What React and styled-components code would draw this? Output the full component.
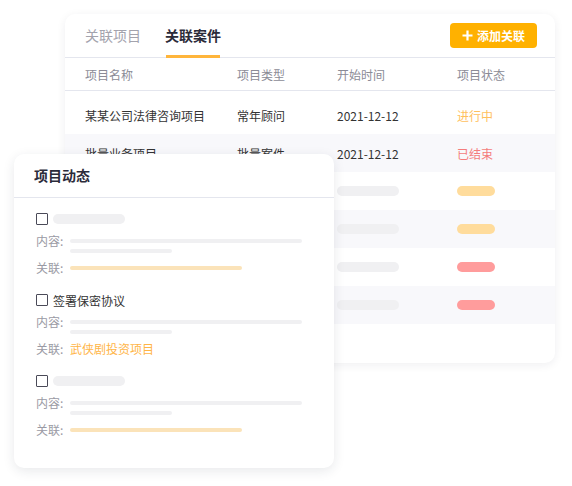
// Libraries
import React from 'react';

// Styles
import styled, { createGlobalStyle } from 'styled-components';

const GlobalStyle = createGlobalStyle`
  html, body {
    margin: 0;
    padding: 0;
    background: #fff;
  }
  body {
    font-family: "Noto Sans CJK SC", "Noto Sans", sans-serif;
    color: #333;
  }
  * {
    box-sizing: border-box;
  }
`;

const CanvasStyle = styled.div`
  position: relative;
  width: 572px;
  height: 486px;
  overflow: hidden;
  background: #fff;
`;

const CardStyle = styled.div`
  position: absolute;
  left: ${(props) => props.x}px;
  top: ${(props) => props.y}px;
  width: ${(props) => props.w}px;
  height: ${(props) => props.h}px;
  background: #fff;
  border-radius: 10px;
  overflow: hidden;
  box-shadow: ${(props) =>
    props.front
      ? '0 3px 12px rgba(30, 35, 60, 0.1)'
      : '0 2px 10px rgba(30, 35, 60, 0.07)'};
`;

// Case table card
const TabBarStyle = styled.div`
  display: flex;
  align-items: center;
  height: 44px;
  padding: 0 18px 0 20px;
  border-bottom: 1px solid #e4e6ee;
`;

const TabStyle = styled.div`
  position: relative;
  display: flex;
  align-items: center;
  height: 100%;
  padding-bottom: 1px;
  margin-right: 24px;
  font-size: 14px;
  font-weight: ${(props) => (props.active ? 700 : 400)};
  color: ${(props) => (props.active ? '#2b2b3a' : '#a3a3ad')};
  ${(props) =>
    props.active &&
    `
    &:after {
      content: '';
      position: absolute;
      left: 1px;
      right: 1px;
      bottom: -1px;
      height: 3px;
      background: #ffb53b;
    }
  `};
`;

const AddButtonStyle = styled.button`
  margin-left: auto;
  display: flex;
  align-items: center;
  justify-content: center;
  gap: 4px;
  width: 87px;
  height: 25px;
  padding: 0;
  border: none;
  border-radius: 4px;
  background: #ffb100;
  color: #fff;
  font-family: inherit;
  font-size: 12px;
  font-weight: 700;
  svg {
    display: block;
  }
`;

const TableRowStyle = styled.div`
  display: grid;
  grid-template-columns: 152px 100px 120px 1fr;
  align-items: center;
  height: ${(props) => props.h || 38}px;
  padding-left: 20px;
  background: ${(props) => (props.striped ? '#f8f8fb' : '#fff')};
  font-size: 12px;
  color: ${(props) => (props.head ? '#8b8b96' : '#333')};
  ${(props) => props.head && 'border-bottom: 1px solid #e4e6ee;'}
`;

const TableBodyStyle = styled.div`
  padding-top: 5px;
`;

const StatusStyle = styled.span`
  color: ${(props) => (props.done ? '#f47c7c' : '#ffbf5e')};
`;

const PillStyle = styled.div`
  width: ${(props) => props.w}px;
  height: 10px;
  border-radius: 5px;
  background: ${(props) => props.color || '#f0f0f2'};
`;

// Activity card
const PanelHeaderStyle = styled.div`
  display: flex;
  align-items: center;
  height: 44px;
  padding: 0 20px 1px;
  border-bottom: 1px solid #e4e6ee;
  font-size: 14px;
  font-weight: 700;
  color: #2b2b3a;
`;

const PanelBodyStyle = styled.div`
  display: flex;
  flex-direction: column;
  gap: 14px;
  padding: 11px 22px 0 22px;
`;

const ItemStyle = styled.div`
  display: flex;
  flex-direction: column;
`;

const ItemTitleStyle = styled.div`
  display: flex;
  align-items: center;
  gap: 5px;
  height: 20px;
  font-size: 12px;
  color: #333;
`;

const CheckboxStyle = styled.span`
  width: 12px;
  height: 12px;
  border: 1.5px solid #4a4a58;
  border-radius: 1px;
`;

const FieldStyle = styled.div`
  display: flex;
  align-items: flex-start;
  margin-top: ${(props) => props.gap}px;
  font-size: 12px;
  line-height: 16px;
`;

const FieldLabelStyle = styled.span`
  width: 34px;
  flex-shrink: 0;
  color: #9a9aa4;
`;

const FieldValueStyle = styled.div`
  display: flex;
  flex-direction: column;
  gap: 6px;
  padding-top: ${(props) => (props.text ? 0 : 6)}px;
  color: #ffb547;
`;

const LineStyle = styled.div`
  width: ${(props) => props.w}px;
  height: 4px;
  border-radius: 2px;
  background: ${(props) => props.color || '#f0f0f2'};
`;

// Components
const PlusIcon = function () {
  return (
    <svg width="11" height="11" viewBox="0 0 11 11">
      <path d="M5.5 0.5v10M0.5 5.5h10" stroke="#fff" strokeWidth="2.2" />
    </svg>
  );
};

const rows = [
  { name: '某某公司法律咨询项目', type: '常年顾问', date: '2021-12-12', status: '进行中' },
  { name: '批量业务项目', type: '批量案件', date: '2021-12-12', status: '已结束', done: true },
];

const placeholders = ['#ffdc9c', '#ffdc9c', '#ff9c9c', '#ff9c9c'];

const CaseTable = function () {
  return (
    <CardStyle x={65} y={14} w={490} h={349}>
      <TabBarStyle>
        <TabStyle>关联项目</TabStyle>
        <TabStyle active>关联案件</TabStyle>
        <AddButtonStyle>
          <PlusIcon />
          添加关联
        </AddButtonStyle>
      </TabBarStyle>
      <TableRowStyle head h={33}>
        <span>项目名称</span>
        <span>项目类型</span>
        <span>开始时间</span>
        <span>项目状态</span>
      </TableRowStyle>
      <TableBodyStyle>
        {rows.map((row, i) => (
          <TableRowStyle key={row.name} striped={i % 2 === 1}>
            <span>{row.name}</span>
            <span>{row.type}</span>
            <span>{row.date}</span>
            <StatusStyle done={row.done}>{row.status}</StatusStyle>
          </TableRowStyle>
        ))}
        {placeholders.map((color, i) => (
          <TableRowStyle key={i} striped={i % 2 === 1}>
            <span />
            <span />
            <PillStyle w={62} />
            <PillStyle w={38} color={color} />
          </TableRowStyle>
        ))}
      </TableBodyStyle>
    </CardStyle>
  );
};

const ActivityItem = function (props) {
  const { title, related } = props;
  return (
    <ItemStyle>
      <ItemTitleStyle>
        <CheckboxStyle />
        {title || <PillStyle w={72} />}
      </ItemTitleStyle>
      <FieldStyle gap={4}>
        <FieldLabelStyle>内容:</FieldLabelStyle>
        <FieldValueStyle>
          <LineStyle w={232} />
          <LineStyle w={102} />
        </FieldValueStyle>
      </FieldStyle>
      <FieldStyle gap={7}>
        <FieldLabelStyle>关联:</FieldLabelStyle>
        <FieldValueStyle text={!!related}>
          {related || <LineStyle w={172} color="#fbe3b9" />}
        </FieldValueStyle>
      </FieldStyle>
    </ItemStyle>
  );
};

const ActivityPanel = function () {
  return (
    <CardStyle front x={14} y={154} w={320} h={314}>
      <PanelHeaderStyle>项目动态</PanelHeaderStyle>
      <PanelBodyStyle>
        <ActivityItem />
        <ActivityItem title="签署保密协议" related="武侠剧投资项目" />
        <ActivityItem />
      </PanelBodyStyle>
    </CardStyle>
  );
};

const App = function () {
  return (
    <>
      <GlobalStyle />
      <CanvasStyle>
        <CaseTable />
        <ActivityPanel />
      </CanvasStyle>
    </>
  );
};

export default App;
